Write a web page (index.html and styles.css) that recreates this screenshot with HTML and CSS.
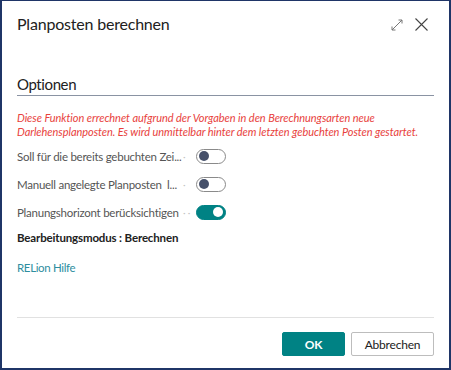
FILE: index.html
```html
<!DOCTYPE html>
<html lang="de">
<head>
<meta charset="utf-8">
<link rel="stylesheet" href="styles.css">
</head>
<body>
<div class="dialog">
  <div class="header">
    <h1 class="title">Planposten berechnen</h1>
    <div class="actions">
      <svg class="icon" width="12" height="12" viewBox="0 0 12 12" fill="none" stroke="#777" stroke-width="1">
        <path d="M1 11 L11 1 M1 11 L1 7.5 M1 11 L4.5 11 M11 1 L7.5 1 M11 1 L11 4.5"/>
      </svg>
      <svg class="icon" width="13" height="13" viewBox="0 0 13 13" fill="none" stroke="#444" stroke-width="1.1">
        <path d="M0.5 0.5 L12.5 12.5 M12.5 0.5 L0.5 12.5"/>
      </svg>
    </div>
  </div>
  <div class="content">
    <h2 class="section">Optionen</h2>
    <p class="note">Diese Funktion errechnet aufgrund der Vorgaben in den Berechnungsarten neue<br>Darlehensplanposten. Es wird unmittelbar hinter dem letzten gebuchten Posten gestartet.</p>
    <div class="field">
      <span class="label">Soll für die bereits gebuchten Zei...</span><span class="dots">·</span>
      <span class="toggle"><span class="knob"></span></span>
    </div>
    <div class="field">
      <span class="label">Manuell angelegte Planposten &nbsp;l...</span><span class="dots">·</span>
      <span class="toggle"><span class="knob"></span></span>
    </div>
    <div class="field">
      <span class="label">Planungshorizont berücksichtigen</span><span class="dots">· ·</span>
      <span class="toggle on"><span class="knob"></span></span>
    </div>
    <div class="mode">Bearbeitungsmodus : Berechnen</div>
    <a class="link">RELion Hilfe</a>
  </div>
  <div class="footer">
    <button class="btn primary">OK</button>
    <button class="btn">Abbrechen</button>
  </div>
</div>
</body>
</html>
```
FILE: styles.css
```css
* { box-sizing: border-box; }
html, body { margin: 0; padding: 0; }
body {
  font-family: "Lato", "Open Sans", sans-serif;
  color: #212121;
  background: #fff;
}
.dialog {
  width: 451px;
  height: 370px;
  border: 2px solid #1f3567;
  border-top-width: 1px;
  display: flex;
  flex-direction: column;
  padding: 0 15px 0 15px;
}
.header {
  display: flex;
  align-items: flex-start;
  justify-content: space-between;
  height: 46px;
  padding-top: 13px;
}
.title {
  margin: 0;
  font-size: 16px;
  line-height: 20px;
  letter-spacing: -0.2px;
  font-weight: 400;
  color: #212121;
}
.actions {
  display: flex;
  align-items: center;
  gap: 12px;
  padding-right: 6px;
  padding-top: 4px;
}
.icon { display: block; }
.content {
  flex: 1;
  display: flex;
  flex-direction: column;
  align-items: flex-start;
}
.section {
  margin: 27px 0 0 0;
  align-self: stretch;
  font-size: 15px;
  letter-spacing: -0.4px;
  font-weight: 400;
  line-height: 20px;
  padding-bottom: 1px;
  border-bottom: 1px solid #8a93a3;
  color: #212121;
}
.note {
  margin: 15px 0 0 0;
  font-size: 11px;
  font-style: italic;
  letter-spacing: -0.05px;
  line-height: 14px;
  color: #e8413c;
  white-space: nowrap;
}
.field {
  display: flex;
  align-items: center;
  height: 28px;
  font-size: 11.5px;
  letter-spacing: -0.25px;
  color: #555;
}
.field:first-of-type { margin-top: 3px; }
.label {
  width: 166px;
  white-space: nowrap;
}
.dots {
  color: #c4c4c4;
  width: 13px;
  font-size: 10px;
  text-align: left;
}
.toggle {
  width: 30px;
  height: 15px;
  border: 1px solid #8a8a8a;
  border-radius: 8px;
  display: flex;
  align-items: center;
  padding: 0 2px;
}
.knob {
  width: 10px;
  height: 10px;
  border-radius: 50%;
  background: #46506a;
}
.toggle.on {
  background: #008284;
  border-color: #008284;
  justify-content: flex-end;
}
.toggle.on .knob { background: #fff; }
.mode {
  margin-top: 3px;
  font-size: 11.5px;
  letter-spacing: -0.15px;
  font-weight: 700;
  color: #212121;
  line-height: 18px;
}
.link {
  margin-top: 12px;
  font-size: 11.5px;
  letter-spacing: -0.35px;
  color: #2e8ea0;
  line-height: 18px;
}
.footer {
  border-top: 1px solid #e1e1e1;
  height: 51px;
  display: flex;
  justify-content: flex-end;
  align-items: flex-start;
  padding-top: 14px;
  gap: 6px;
}
.btn {
  font-family: inherit;
  height: 24px;
  font-size: 12px;
  letter-spacing: -0.2px;
  border: 1px solid #bdbdbd;
  background: #fff;
  color: #212121;
  border-radius: 2px;
  padding: 0;
  width: 83px;
}
.btn.primary {
  width: 63px;
  background: #008284;
  border-color: #008284;
  color: #fff;
  font-weight: 700;
}
```
